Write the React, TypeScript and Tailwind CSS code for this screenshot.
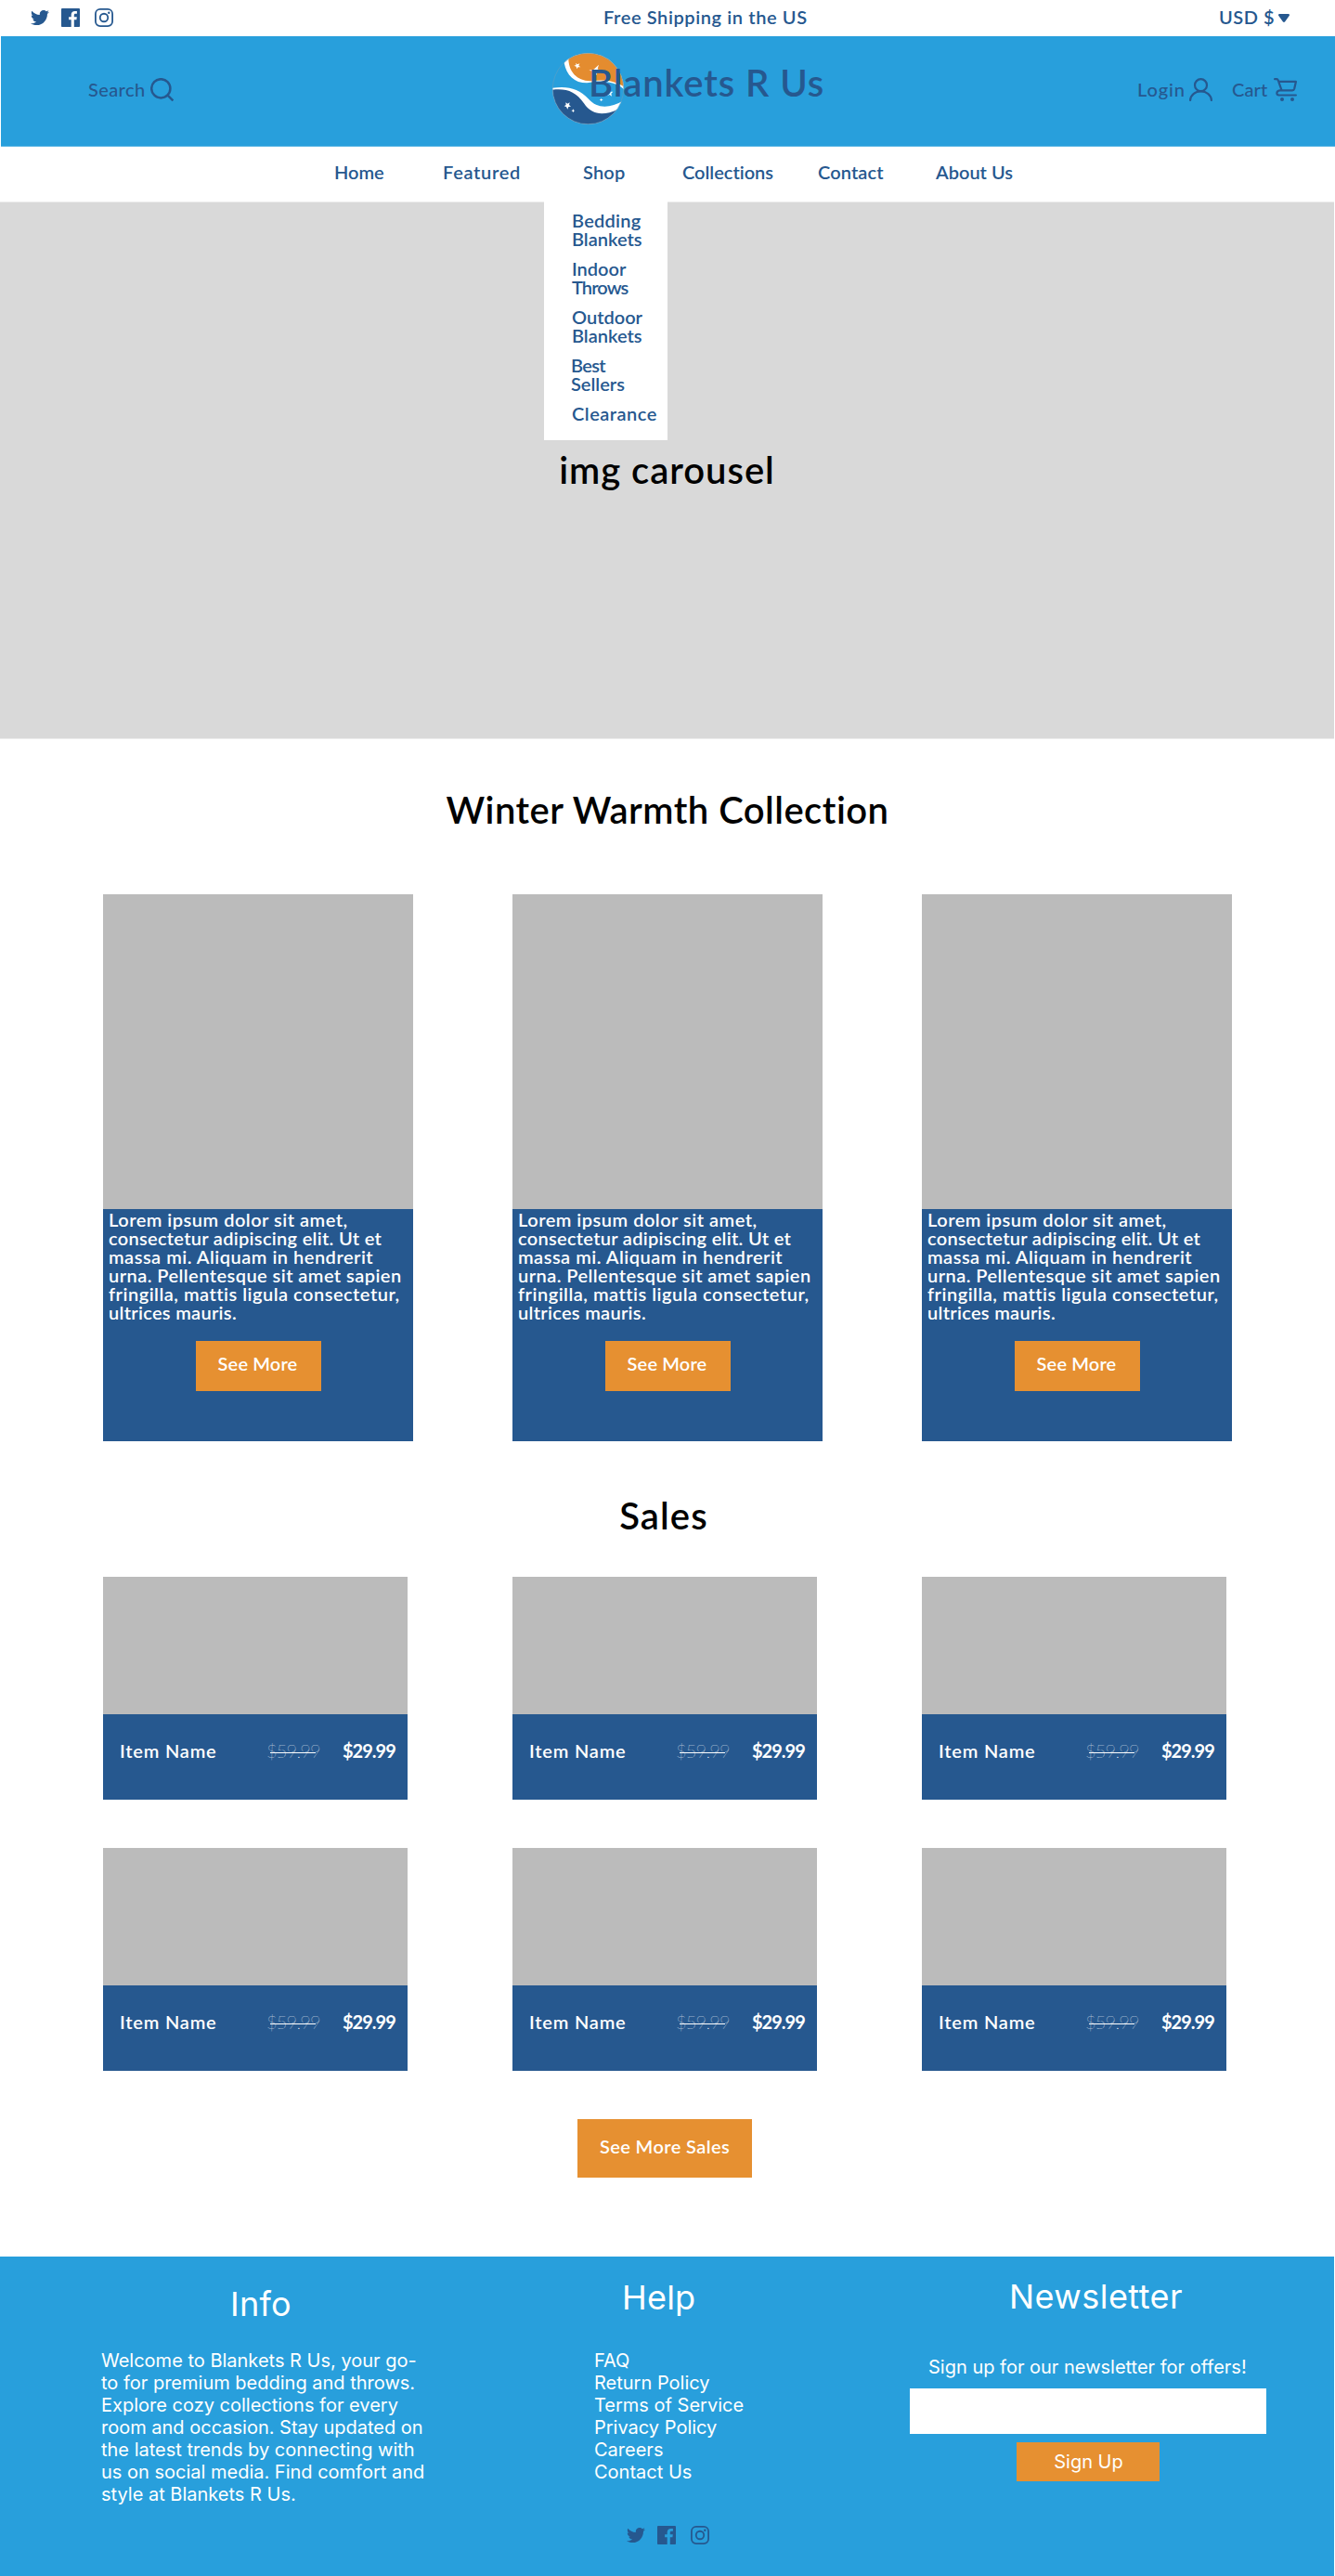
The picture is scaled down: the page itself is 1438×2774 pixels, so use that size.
import type { ReactNode } from "react";
import { FaTwitter } from "react-icons/fa";

function FacebookIcon() {
  return (
    <svg viewBox="0 0 20 20" className="size-5" fill="currentColor">
      <path d="M18.9 0H1.1C.5 0 0 .5 0 1.1v17.8c0 .6.5 1.1 1.1 1.1h9.6v-7.7H8.1V9.2h2.6V7c0-2.6 1.6-4 3.9-4 1.1 0 2 .1 2.3.1v2.7h-1.6c-1.2 0-1.5.6-1.5 1.5v2h3l-.4 3h-2.6V20h5.1c.6 0 1.1-.5 1.1-1.1V1.1C20 .5 19.5 0 18.9 0z" />
    </svg>
  );
}

function InstagramIcon() {
  return (
    <svg viewBox="0 0 20 20" className="size-5" fill="none" stroke="currentColor" strokeWidth="1.8">
      <rect x="0.9" y="0.9" width="18.2" height="18.2" rx="5" />
      <circle cx="10" cy="10" r="4.25" />
      <circle cx="15.3" cy="4.7" r="1.2" fill="currentColor" stroke="none" />
    </svg>
  );
}

function SocialLinks() {
  return (
    <div className="flex text-[#26588f]">
      <FaTwitter className="size-5" />
      <div className="ml-[13px]">
        <FacebookIcon />
      </div>
      <div className="ml-4">
        <InstagramIcon />
      </div>
    </div>
  );
}

function SearchIcon() {
  return (
    <svg viewBox="0 0 25 25" className="size-[25px]" fill="none" stroke="currentColor" strokeWidth="2.5">
      <circle cx="11.3" cy="11.3" r="10.1" />
      <path d="M18.4 18.4L24.4 24.4" />
    </svg>
  );
}

function UserIcon() {
  return (
    <svg viewBox="0 0 25 25" className="size-[25px]" fill="none" stroke="currentColor" strokeWidth="2.2" strokeLinecap="round">
      <circle cx="12.5" cy="7.7" r="6.5" />
      <path d="M1.1 24C1.3 18.5 6.3 14.400 12.5 14.400s11.2 4.100 11.400 9.600" />
    </svg>
  );
}

function CartIcon() {
  return (
    <svg viewBox="0 0 25 25" className="size-[25px]" fill="none" stroke="currentColor" strokeWidth="2.2" strokeLinecap="round" strokeLinejoin="round">
      <path d="M1.1 1.2h2.100c.8 0 1.2.4 1.5 1.2L8.600 13.300M5.200 3.900H23.900l-1.700 7.600c-.3 1.200-.9 1.800-2.100 1.800H6.400C2.600 13.800 2.400 18.500 5.600 18.500H23.900" />
      <circle cx="9" cy="23" r="2" fill="currentColor" stroke="none" />
      <circle cx="20" cy="23" r="2" fill="currentColor" stroke="none" />
    </svg>
  );
}

function Logo() {
  return (
    <svg viewBox="0 0 231 231" className="size-[77px] shrink-0">
      <defs>
        <clipPath id="globe">
          <circle cx="115.5" cy="115.5" r="115" />
        </clipPath>
      </defs>
      <g clipPath="url(#globe)">
        <rect width="231" height="231" fill="#289fdc" />
        <path d="M38 32C46 72 70 97 112 97C150 90 195 88 231 117V0H50Z" fill="#fff" />
        <path d="M52 22C54 60 78 90 122 91C160 86 195 86 231 109V0H60Z" fill="#e48c2f" />
        <path d="M0 113C50 106 85 114 118 150C145 180 185 180 231 153V231H0Z" fill="#fff" />
        <path d="M0 119C45 114 75 124 102 163C128 201 165 204 212 182L231 231H0Z" fill="#26588f" />
        <g fill="#fff">
          <path d="M75 33l6 4 7-3-3 7 6 5-8 0-4 6-2-8-7-3 7-2z" />
          <path d="M150 38l-4 14 14 8-15 1-3 12-8-13-16-4 16-3z" />
          <path d="M43 160l6 4 7-4-2 8 6 5-8 1-3 8-4-8-7-2 6-4z" />
          <path d="M67 181l2 4 4 1-4 2-2 5-2-5-4-2 4-1z" />
          <path d="M186 117l1 8 9 0-6 6 2 9-7-5-8 3 4-8-4-6 7-1z" />
          <path d="M158 147l2 3 4 1-4 2-2 4-2-4-4-2 4-1z" />
        </g>
      </g>
      <circle cx="115.5" cy="115.5" r="114.5" fill="none" stroke="#6f9fbd" strokeWidth="1.5" />
    </svg>
  );
}

const navLinks = [
  { label: "Home", tracking: "" },
  { label: "Featured", tracking: "tracking-[0.7px]" },
  { label: "Shop", tracking: "tracking-[0.2px]" },
  { label: "Collections", tracking: "" },
  { label: "Contact", tracking: "tracking-[0.1px]" },
  { label: "About Us", tracking: "" },
];

function ShopMenu() {
  return (
    <div className="absolute -left-[42px] top-[42px] z-10 flex h-[257px] w-[133px] flex-col gap-3 bg-white pl-[30px] pt-[10px]">
      <p>
        <span className="tracking-[0.25px]">Bedding</span>
        <br />
        Blankets
      </p>
      <p>
        Indoor
        <br />
        <span className="tracking-[-0.9px]">Throws</span>
      </p>
      <p>
        Outdoor
        <br />
        Blankets
      </p>
      <p className="-ml-px">
        <span className="tracking-[-0.7px]">Best</span>
        <br />
        Sellers
      </p>
      <p className="tracking-[0.5px]">Clearance</p>
    </div>
  );
}

function Heading({ children }: { children: ReactNode }) {
  return <h2 className="text-center text-[40px] font-semibold leading-[48px] text-black">{children}</h2>;
}

function CollectionCard() {
  return (
    <article className="w-[334px]">
      <div className="h-[339px] bg-[#bbbbbb]" />
      <div className="h-[250px] bg-[#26588f] pt-px text-xl/5 font-semibold text-white">
        <p className="whitespace-nowrap pl-[6px]">
          <span className="tracking-[0.5px]">Lorem ipsum dolor sit amet,</span>
          <br />
          <span className="tracking-[0.3px]">consectetur adipiscing elit. Ut et</span>
          <br />
          <span className="tracking-[0.5px]">massa mi. Aliquam in hendrerit</span>
          <br />
          <span className="tracking-[0.45px]">urna. Pellentesque sit amet sapien</span>
          <br />
          <span className="tracking-[0.5px]">fringilla, mattis ligula consectetur,</span>
          <br />
          <span className="tracking-[0.3px]">ultrices mauris.</span>
        </p>
        <button className="ml-[100px] mt-[21px] flex h-[54px] w-[135px] justify-center bg-[#e69031] pt-[14px] pr-[2px] tracking-[0.15px]">
          See More
        </button>
      </div>
    </article>
  );
}

function SaleCard() {
  return (
    <article className="w-[328px]">
      <div className="h-[148px] bg-[#bbbbbb]" />
      <div className="flex h-[92px] bg-[#26588f] pl-[18px] pt-[29px] text-xl/5 font-semibold text-white">
        <span className="w-[158px] tracking-[0.8px]">Item Name</span>
        <span className="relative w-[82px] font-extralight tracking-[-0.8px]">
          $59.99
          <span className="absolute left-1 top-3 h-px w-[49px] bg-white" />
        </span>
        <span className="font-bold tracking-[-1px]">$29.99</span>
      </div>
    </article>
  );
}

export default function App() {
  return (
    <div className="h-[2774px] w-[1438px] overflow-hidden bg-white font-['Lato','Liberation_Sans',sans-serif] [font-variant-ligatures:none]">
      <div className="flex h-[39px] pl-[33px] text-xl/5 font-semibold text-[#26588f]">
        <div className="w-[617px] pt-[9px]">
          <SocialLinks />
        </div>
        <p className="w-[663px] pt-2 tracking-[0.6px]">Free Shipping in the US</p>
        <div className="flex pt-2">
          <span className="w-16 tracking-[0.5px]">USD $</span>
          <svg viewBox="0 0 12 9" className="mt-[7px] h-[9px] w-3" fill="currentColor">
            <path d="M1.5 0h9C12 0 12.400 1.300 11.500 2.300L7.200 8.200Q6 9.600 4.800 8.200L.5 2.300C-.4 1.300 0 0 1.500 0z" />
          </svg>
        </div>
      </div>

      <header className="ml-px flex h-[119px] border-b border-[#53b2e3] bg-[#289fdc] pl-[94px] text-xl/5 font-medium text-[#26588f]">
        <div className="flex w-[500px] pt-[45px]">
          <span className="w-[67px] pt-[2px] tracking-[0.4px]">Search</span>
          <SearchIcon />
        </div>
        <div className="flex w-[630px] pt-[18px]">
          <Logo />
          <span className="-ml-[38px] mt-2 text-[40px]/[48px] font-semibold tracking-[0.9px]">Blankets R Us</span>
        </div>
        <div className="flex pt-[45px]">
          <span className="w-14 pt-[2px] tracking-[0.9px]">Login</span>
          <UserIcon />
          <span className="ml-[21px] w-[45px] pt-[2px] tracking-[0.1px]">Cart</span>
          <CartIcon />
        </div>
      </header>

      <nav className="grid h-[59px] grid-cols-[117px_151px_107px_146px_127px_auto] pl-[360px] pt-[17px] text-xl/5 font-semibold text-[#26588f]">
        {navLinks.map((link) => (
          <div key={link.label} className="relative">
            <span className={link.tracking}>{link.label}</span>
            {link.label === "Shop" && <ShopMenu />}
          </div>
        ))}
      </nav>

      <section className="h-[579px] w-[1437px] border-y border-[#ececec] bg-[#d9d9d9] pt-[264px]">
        <Heading>
          <span className="tracking-[0.95px]">img carousel</span>
        </Heading>
      </section>

      <section className="pt-[52px]">
        <Heading>
          <span className="tracking-[0.47px]">Winter Warmth Collection</span>
        </Heading>
        <div className="mt-[67px] flex gap-[107px] pl-[111px]">
          <CollectionCard />
          <CollectionCard />
          <CollectionCard />
        </div>
      </section>

      <section className="h-[878px] pt-[56px]">
        <Heading>
          <span className="pr-2 tracking-[1.1px]">Sales</span>
        </Heading>
        <div className="mt-[42px] grid grid-cols-[328px_328px_328px] gap-x-[113px] gap-y-[52px] pl-[111px]">
          <SaleCard />
          <SaleCard />
          <SaleCard />
          <SaleCard />
          <SaleCard />
          <SaleCard />
        </div>
        <button className="ml-[622px] mt-[52px] flex h-[63px] w-[188px] justify-center bg-[#e69031] pt-[19px] text-xl/5 font-semibold tracking-[0.4px] text-white">
          See More Sales
        </button>
      </section>

      <footer className="flex h-[344px] w-[1437px] bg-[#289fdc] pl-[109px] font-['Inter','Liberation_Sans',sans-serif] text-xl/6 text-white">
        <div className="w-[531px] pt-[29px]">
          <h3 className="pl-[139px] text-4xl/[44px] tracking-[0.3px]">Info</h3>
          <p className="mt-[27px] whitespace-nowrap">
            Welcome to Blankets R Us, your go-
            <br />
            to for premium bedding and throws.
            <br />
            Explore cozy collections for every
            <br />
            room and occasion. Stay updated on
            <br />
            the latest trends by connecting with
            <br />
            us on social media. Find comfort and
            <br />
            style at Blankets R Us.
          </p>
        </div>
        <div className="w-[340px] pt-[22px]">
          <h3 className="pl-[30px] text-4xl/[44px] tracking-[0.2px]">Help</h3>
          <ul className="mt-[34px]">
            <li>FAQ</li>
            <li>Return Policy</li>
            <li>Terms of Service</li>
            <li>Privacy Policy</li>
            <li>Careers</li>
            <li>Contact Us</li>
          </ul>
          <div className="mt-[46px] pl-[35px]">
            <SocialLinks />
          </div>
        </div>
        <div className="w-[384px] pt-[21px]">
          <h3 className="pl-[107px] text-4xl/[44px] tracking-[0.45px]">Newsletter</h3>
          <p className="mt-[42px] whitespace-nowrap pl-5">Sign up for our newsletter for offers!</p>
          <input className="mt-[11px] block h-[49px] w-[384px] bg-white" />
          <button className="ml-[115px] mt-[9px] flex h-[42px] w-[154px] justify-center bg-[#e69031] pl-px pt-[9px]">Sign Up</button>
        </div>
      </footer>
    </div>
  );
}
